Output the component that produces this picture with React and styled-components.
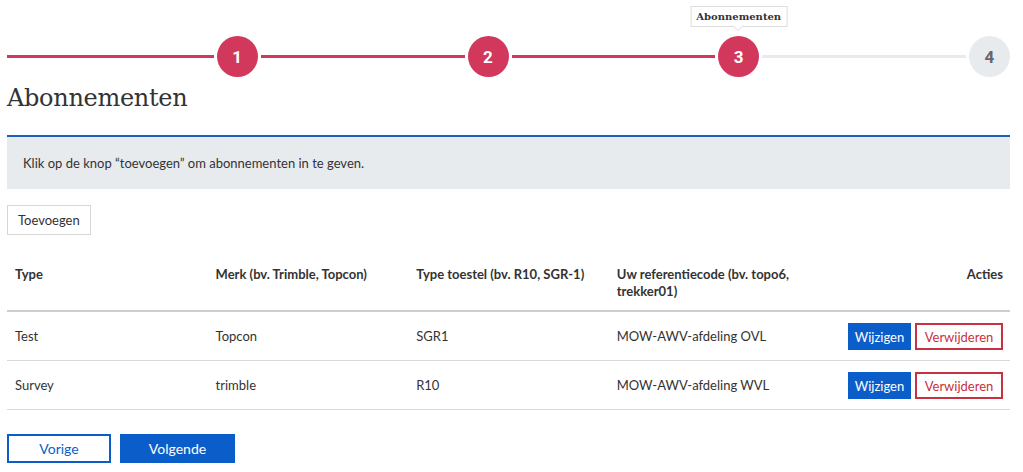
import React from 'react';
import styled, { createGlobalStyle } from 'styled-components';

const GlobalStyle = createGlobalStyle`
  body {
    margin: 0;
    background: #fff;
    font-family: Lato, "Open Sans", sans-serif;
    color: #333;
  }
`;

const Page = styled.div`
  width: 1003px;
  margin-left: 7px;
`;

const Stepper = styled.ol`
  display: flex;
  list-style: none;
  margin: 0;
  padding: 36px 0 0;
`;

const Step = styled.li`
  flex: 1;
  display: flex;
  align-items: center;
`;

const Line = styled.span`
  flex: 1;
  height: 3px;
  margin: 0 3px 0 ${(p) => (p.first ? '0' : '3px')};
  background: ${(p) => (p.done ? '#d2375c' : '#e8ebee')};
`;

const Circle = styled.span`
  position: relative;
  width: 41px;
  height: 41px;
  border-radius: 50%;
  display: flex;
  align-items: center;
  justify-content: center;
  font-family: Roboto, sans-serif;
  font-weight: 700;
  font-size: 17px;
  background: ${(p) => (p.done ? '#d2375c' : '#e8ebee')};
  color: ${(p) => (p.done ? '#fff' : '#666')};
`;

const Tooltip = styled.span`
  position: absolute;
  bottom: 50px;
  left: 50%;
  transform: translateX(-50%);
  white-space: nowrap;
  background: #fff;
  border: 1px solid #ddd;
  padding: 2px 5px;
  font-family: "DejaVu Serif", serif;
  font-weight: 700;
  font-size: 10px;
  line-height: 15px;
  color: #333;

  &::after {
    content: '';
    position: absolute;
    left: 50%;
    bottom: -5px;
    margin-left: -5px;
    width: 8px;
    height: 8px;
    background: #fff;
    border-right: 1px solid #ddd;
    border-bottom: 1px solid #ddd;
    transform: rotate(45deg) scale(0.7);
  }
`;

const Title = styled.h1`
  margin: 4px 0 0;
  font-family: "DejaVu Serif", serif;
  font-weight: 400;
  font-size: 24px;
  line-height: 34px;
  letter-spacing: -0.3px;
  color: #333;
`;

const Info = styled.div`
  margin-top: 20px;
  border-top: 2px solid #1d5fb5;
  background: #e8ebee;
  padding: 17px 16px 16px;
  font-size: 13px;
  line-height: 19px;
`;

const GhostButton = styled.button`
  margin-top: 16px;
  height: 30px;
  padding: 0 10px;
  background: #fff;
  border: 1px solid #d6d6d6;
  font-family: inherit;
  font-size: 13px;
  color: #333;
`;

const Table = styled.table`
  width: 100%;
  margin-top: 18px;
  border-collapse: collapse;
  table-layout: fixed;
  font-size: 13px;
`;

const Th = styled.th`
  padding: 13px ${(p) => (p.right ? '7px' : '8px')} 10px 8px;
  text-align: ${(p) => (p.right ? 'right' : 'left')};
  vertical-align: top;
  font-weight: 700;
  line-height: 17px;
  border-bottom: 2px solid #cfcfcf;
`;

const Td = styled.td`
  padding: 0 ${(p) => (p.right ? '7px' : '8px')} 0 8px;
  height: 48px;
  text-align: ${(p) => (p.right ? 'right' : 'left')};
  vertical-align: middle;
  border-bottom: 1px solid #d9d9d9;
`;

const Actions = styled.div`
  display: flex;
  justify-content: flex-end;
  gap: 4px;
  padding-top: 1px;
`;

const SmallButton = styled.button`
  height: 27px;
  width: ${(p) => p.w}px;
  padding: 0;
  font-family: inherit;
  font-size: 13px;
  background: ${(p) => (p.danger ? '#fff' : '#0b5ec9')};
  color: ${(p) => (p.danger ? '#c8313f' : '#fff')};
  border: 2px solid ${(p) => (p.danger ? '#c8313f' : '#0b5ec9')};
`;

const Footer = styled.div`
  display: flex;
  gap: 9px;
  margin-top: 24px;
`;

const NavButton = styled.button`
  height: 29px;
  width: ${(p) => p.w}px;
  font-family: inherit;
  font-size: 14px;
  background: ${(p) => (p.primary ? '#0b5ec9' : '#fff')};
  color: ${(p) => (p.primary ? '#fff' : '#0b5ec9')};
  border: 2px solid #0b5ec9;
`;

const steps = [
  { n: 1, done: true },
  { n: 2, done: true },
  { n: 3, done: true, label: 'Abonnementen' },
  { n: 4, done: false },
];

const rows = [
  { type: 'Test', merk: 'Topcon', toestel: 'SGR1', code: 'MOW-AWV-afdeling OVL' },
  { type: 'Survey', merk: 'trimble', toestel: 'R10', code: 'MOW-AWV-afdeling WVL' },
];

const App = () => (
  <Page>
    <GlobalStyle />
    <Stepper>
      {steps.map((s, i) => (
        <Step key={s.n}>
          <Line first={i === 0} done={s.done} />
          <Circle done={s.done}>
            {s.label && <Tooltip>{s.label}</Tooltip>}
            {s.n}
          </Circle>
        </Step>
      ))}
    </Stepper>
    <Title>Abonnementen</Title>
    <Info>Klik op de knop “toevoegen” om abonnementen in te geven.</Info>
    <GhostButton>Toevoegen</GhostButton>
    <Table>
      <thead>
        <tr>
          <Th>Type</Th>
          <Th>Merk (bv. Trimble, Topcon)</Th>
          <Th>Type toestel (bv. R10, SGR-1)</Th>
          <Th>Uw referentiecode (bv. topo6, trekker01)</Th>
          <Th right>Acties</Th>
        </tr>
      </thead>
      <tbody>
        {rows.map((r) => (
          <tr key={r.type}>
            <Td>{r.type}</Td>
            <Td>{r.merk}</Td>
            <Td>{r.toestel}</Td>
            <Td>{r.code}</Td>
            <Td right>
              <Actions>
                <SmallButton w={63}>Wijzigen</SmallButton>
                <SmallButton w={88} danger>Verwijderen</SmallButton>
              </Actions>
            </Td>
          </tr>
        ))}
      </tbody>
    </Table>
    <Footer>
      <NavButton w={104}>Vorige</NavButton>
      <NavButton w={115} primary>Volgende</NavButton>
    </Footer>
  </Page>
);

export default App;
